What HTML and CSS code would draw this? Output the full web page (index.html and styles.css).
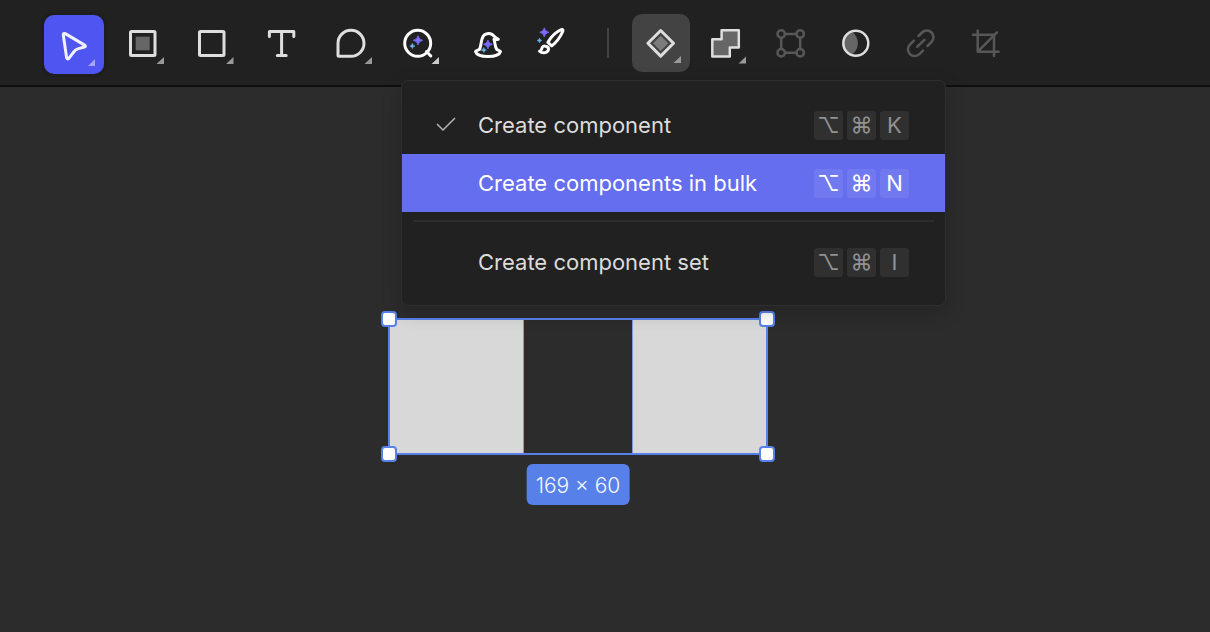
FILE: index.html
```html
<!DOCTYPE html>
<html lang="en">
<head>
<meta charset="utf-8">
<title>Design editor</title>
<link rel="stylesheet" href="styles.css">
</head>
<body>
<svg class="defs" aria-hidden="true">
  <defs>
    <linearGradient id="spark" x1="0" y1="1" x2="1" y2="0">
      <stop offset="0" stop-color="#4f7cf7"/><stop offset="1" stop-color="#a45cf6"/>
    </linearGradient>
    <symbol id="star" viewBox="0 0 10 10">
      <path d="M5 0C5.8 3 7 4.2 10 5C7 5.8 5.8 7 5 10C4.2 7 3 5.8 0 5C3 4.2 4.2 3 5 0Z"/>
    </symbol>
  </defs>
</svg>

<header class="toolbar">
  <div class="tools" role="toolbar" aria-label="Drawing tools">
    <button class="tool tool-active" aria-label="Move">
      <svg viewBox="0 0 60 58"><path class="line" d="M21.3 17.6L40.6 29.1Q42.3 30.3 40.3 31L34.5 32.6Q31 33.7 29.2 36.6L25 42.2Q23.3 44 22.6 41.6L19.3 19Q19.3 16.8 21.3 17.6Z"/><path class="corner" d="M51 43V50H44Z"/></svg>
    </button>
    <button class="tool" aria-label="Artboard">
      <svg viewBox="0 0 60 58"><rect class="line" x="17.5" y="17.5" width="24.5" height="24" rx="1"/><rect class="solid" x="22.7" y="22.7" width="14" height="13.6"/><path class="corner" d="M51 43V50H43.5Z"/></svg>
    </button>
    <button class="tool" aria-label="Rectangle">
      <svg viewBox="0 0 60 58"><rect class="line" x="17.5" y="17.5" width="24.5" height="24" rx="1"/><path class="corner" d="M51.5 43V50H44Z"/></svg>
    </button>
    <button class="tool" aria-label="Text">
      <svg viewBox="0 0 60 58"><path class="line" d="M18.4 22.6V17.5H42.8V22.6M30.6 17.500V41.500M26.300 41.500H35.200"/></svg>
    </button>
    <button class="tool" aria-label="Comment">
      <svg viewBox="0 0 60 58"><path class="line" d="M19 42.3Q18 42.3 18 41.3V29.4A13 13 0 1 1 31 42.3Z"/><path class="corner" d="M52 43V50H44.500Z"/></svg>
    </button>
    <button class="tool tool-ai" aria-label="AI search">
      <svg viewBox="0 0 60 58"><circle class="line" cx="28.700" cy="29.300" r="13"/><path class="line" d="M37.500 37.500L41.800 42"/><use class="spark" href="#star" x="24.200" y="21.500" width="9.600" height="9.600"/><use class="spark-small" href="#star" x="20.500" y="29.200" width="5.600" height="5.600"/><path class="corner" d="M50 43V50H42.500Z"/></svg>
    </button>
    <button class="tool tool-ai" aria-label="Magic wizard">
      <svg viewBox="0 0 60 58"><path class="line" d="M21.600 35.300C23.500 31 22.600 27 25 22.500C26.500 19.600 31 18.700 34 20.400C36.300 21.800 37.500 24.500 40.300 25.300C39 26 37.500 25.600 36 25.200C37.200 28.600 36.600 32.500 38.900 35.600C40.500 36.300 42 36.800 42.500 37.600C41.500 41 35.500 42.600 30 42.600C24.500 42.600 18.500 41 17.500 37.600C18 36.600 20 36.200 21.600 35.300Z"/><use class="spark" href="#star" x="25.300" y="25.700" width="9.200" height="9.200"/><use class="spark-small" href="#star" x="23" y="33.200" width="5.600" height="5.600"/></svg>
    </button>
    <button class="tool tool-ai" aria-label="Magic brush">
      <svg viewBox="0 0 60 58"><path class="line" d="M20.800 28.400C24 23 28.500 18.200 34.200 15.700C36 15.200 36.200 16 35.700 17.500C33.300 23 29.500 28.200 24.800 31.900Z"/><path class="line" d="M18 32C20.300 32.400 21.800 33.800 21.500 35.600C21 38.800 15.500 40 12.500 37.200C14.700 37 14.300 34.700 15.500 33C16.200 32 17 31.800 18 32Z"/><use class="spark" href="#star" x="12.600" y="13.600" width="9.400" height="9.400"/><use class="spark-small" href="#star" x="9.900" y="23.900" width="5.200" height="5.200"/></svg>
    </button>
  </div>
  <span class="separator"></span>
  <div class="tools tools-edit" role="toolbar" aria-label="Object actions">
    <button class="tool tool-open" aria-label="Component" aria-haspopup="menu" aria-expanded="true">
      <svg viewBox="0 0 58 58"><path class="line" d="M28.700 16.500L41.500 29.300L28.700 42.100L15.900 29.300Z"/><path class="solid" d="M28.700 21.700L36.300 29.300L28.700 36.900L21.100 29.300Z"/><path class="corner" d="M49 42V49H41.500Z"/></svg>
    </button>
    <button class="tool" aria-label="Union">
      <svg viewBox="0 0 58 58"><path class="line thin filled" d="M24.600 16.300H41.800V33.500H32.800V42.500H15.300V25.200H24.600Z"/><path class="corner" d="M49 42.500V49.500H41.500Z"/></svg>
    </button>
    <button class="tool" aria-label="Edit points" disabled>
      <svg viewBox="0 0 58 58"><path class="line thin" d="M23 20H34.500M23 38.800H34.500M19.200 24V35M38.200 24V35"/><circle class="line thin" cx="19.200" cy="20" r="3.700"/><circle class="line thin" cx="38.200" cy="20" r="3.700"/><circle class="line thin" cx="19.200" cy="38.800" r="3.700"/><circle class="line thin" cx="38.200" cy="38.800" r="3.700"/></svg>
    </button>
    <button class="tool" aria-label="Mask">
      <svg viewBox="0 0 58 58"><path class="solid" d="M24.500 17.600C33 23 33 35.500 24.500 41A12.300 12.300 0 0 1 24.500 17.600Z"/><circle class="line thin" cx="28.800" cy="29.300" r="12.500"/></svg>
    </button>
    <button class="tool" aria-label="Link" disabled>
      <svg viewBox="0 0 58 58"><path class="line thin" d="M26.500 22L30 18.500A6.700 6.700 0 0 1 39.500 28L35.500 32M31 36.600L27.400 40.100A6.700 6.700 0 0 1 17.900 30.600L21.900 26.600M25.200 32.800L32.400 25.800"/></svg>
    </button>
    <button class="tool" aria-label="Crop" disabled>
      <svg viewBox="0 0 58 58"><path class="line thin" d="M20.700 16.500V37.700H41.500M16 20.700H37V42M20.700 37.700L40 18.300"/></svg>
    </button>
  </div>

  <div class="menu" role="menu" aria-label="Component">
    <button class="menu-item" role="menuitem">
      <span class="check"><svg viewBox="0 0 20 14"><path d="M1 6L7 12L19 0"/></svg></span>
      <span class="menu-label">Create component</span>
      <span class="keys"><kbd>⌥</kbd><kbd>⌘</kbd><kbd>K</kbd></span>
    </button>
    <button class="menu-item menu-item-active" role="menuitem">
      <span class="check"></span>
      <span class="menu-label">Create components in bulk</span>
      <span class="keys"><kbd>⌥</kbd><kbd>⌘</kbd><kbd>N</kbd></span>
    </button>
    <hr class="menu-divider">
    <button class="menu-item" role="menuitem">
      <span class="check"></span>
      <span class="menu-label">Create component set</span>
      <span class="keys"><kbd>⌥</kbd><kbd>⌘</kbd><kbd>I</kbd></span>
    </button>
  </div>
</header>

<main class="canvas">
  <div class="selection">
    <div class="shape shape-left"></div>
    <div class="shape shape-right"></div>
    <i class="handle top left"></i>
    <i class="handle top right"></i>
    <i class="handle bottom left"></i>
    <i class="handle bottom right"></i>
    <output class="size">169 × 60</output>
  </div>
</main>
</body>
</html>
```

FILE: styles.css
```css
* { box-sizing: border-box; }

body {
  margin: 0;
  min-height: 100vh;
  display: flex;
  flex-direction: column;
  background: #2c2c2c;
  color: #dcdcdc;
  font-family: Inter, "Noto Sans", sans-serif;
}

button {
  margin: 0;
  padding: 0;
  border: 0;
  background: none;
  color: inherit;
  font: inherit;
}

.defs { position: absolute; width: 0; height: 0; }

/* Toolbar */
.toolbar {
  position: relative;
  z-index: 1;
  display: flex;
  align-items: flex-start;
  padding: 14px 44px 13px;
  background: #212121;
  border-bottom: 2px solid #0e0e0e;
}

.tools { display: flex; gap: 9px; height: 58px; }
.tools-edit { gap: 7px; }

.tool {
  width: 60px;
  height: 58px;
  border-radius: 10px;
  color: #dedede;
}

.tools-edit .tool { width: 58px; }
.tool svg { display: block; width: 100%; height: 58px; }
.tool:disabled { color: #575757; }
.tool-ai { color: #fff; }

.tool-active {
  height: 59px;
  margin-top: 1px;
  background: #4f55f0;
  color: #f1f1ff;
  box-shadow: 0 0 0 3px #1e1e1e;
}

.tool-open { background: #434343; }

.line {
  fill: none;
  stroke: currentColor;
  stroke-width: 3;
  stroke-linecap: round;
  stroke-linejoin: round;
}

.thin { stroke-width: 2.5; }
.filled { fill: #666; }
.solid { fill: #666; }
.tool-open .solid { fill: #7c7c7c; }
.corner { fill: #999; }
.tool-active .corner { fill: #a3a6f7; }
.tool-ai .corner { fill: #ccc; }
.spark { fill: url(#spark); stroke: #7467f6; stroke-width: 1; overflow: visible; }
.spark-small { fill: #68b4e8; stroke: #68b4e8; stroke-width: 1; overflow: visible; }

.separator {
  width: 2px;
  height: 30px;
  margin: 14px 23px 0 20px;
  background: #414141;
}

/* Component menu */
.menu {
  position: absolute;
  top: 80px;
  left: 401px;
  width: 545px;
  padding: 15px 0 14px;
  background: #212121;
  border: 1px solid #2f2f2f;
  border-radius: 7px;
  box-shadow: 0 6px 20px rgba(0, 0, 0, 0.2);
}

.menu-item {
  display: flex;
  align-items: center;
  width: 100%;
  height: 58px;
  padding: 0 36px 0 34px;
  font-size: 22px;
  line-height: 28px;
  text-align: left;
}

.menu-item-active { background: #646eee; color: #fff; }

.check { width: 42px; }

.check svg {
  display: block;
  width: 20px;
  height: 14px;
  fill: none;
  stroke: #b4b4b4;
  stroke-width: 1.5;
  overflow: visible;
}

.menu-label { flex: 1; white-space: nowrap; }

.keys { display: flex; gap: 4px; }

kbd {
  width: 29px;
  height: 29px;
  border-radius: 3px;
  background: #303030;
  color: #929292;
  font: 22px/29px Inter, "DejaVu Sans", sans-serif;
  text-align: center;
}

.menu-item-active kbd { background: #7079f0; color: #fff; }

.menu-divider {
  height: 2px;
  margin: 8px 11px 11px;
  border: 0;
  background: #2d2d2d;
}

/* Canvas */
.canvas { position: relative; flex: 1; }

.selection {
  position: absolute;
  top: 231px;
  left: 388px;
  width: 380px;
  height: 137px;
  border: 2px solid #5780e8;
}

.shape {
  position: absolute;
  top: 0;
  bottom: 0;
  width: 134px;
  background: #d8d8d8;
}

.shape-left { left: 0; border-right: 1px solid #7f9be0; }
.shape-right { right: 0; border-left: 1px solid #7f9be0; }

.handle {
  position: absolute;
  width: 16px;
  height: 16px;
  background: #fff;
  border: 2px solid #5780e8;
  border-radius: 4px;
}

.top { top: -9px; }
.bottom { bottom: -9px; }
.left { left: -9px; }
.right { right: -9px; }

.size {
  position: absolute;
  top: 144px;
  left: 50%;
  transform: translateX(-50%);
  padding: 8px 9px 5px;
  border-radius: 6px;
  background: #5780e8;
  color: #f4f7ff;
  font-size: 21px;
  font-weight: 300;
  line-height: 28px;
  white-space: nowrap;
}
```
